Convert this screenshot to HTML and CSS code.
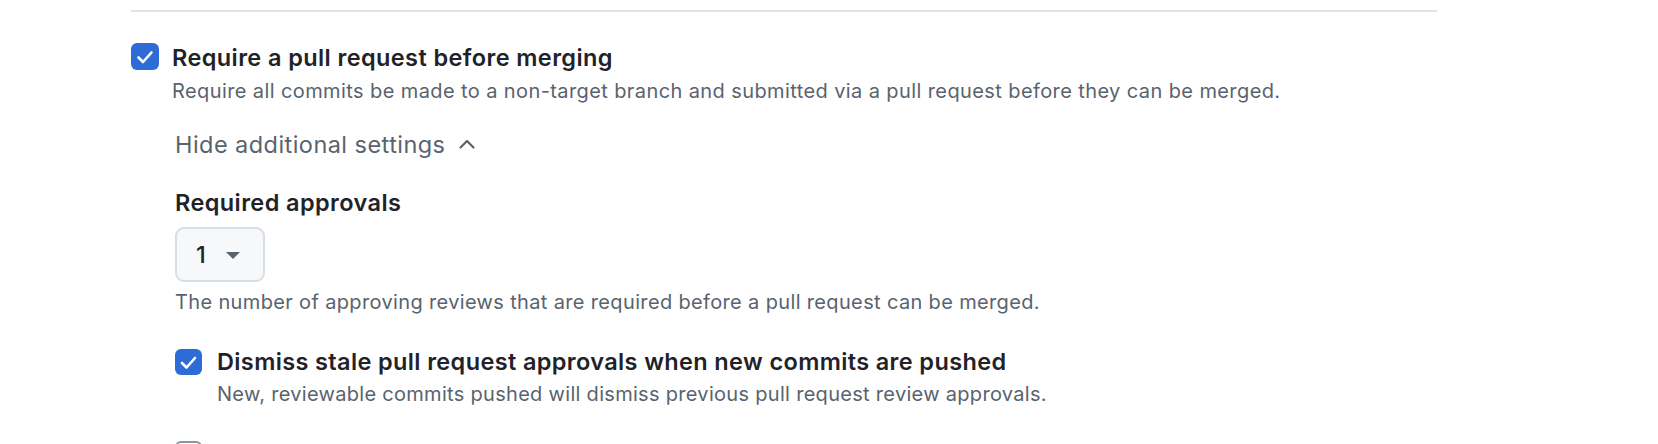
FILE: index.html
```html
<!DOCTYPE html>
<html>
<head>
<meta charset="utf-8">
<link rel="stylesheet" href="styles.css">
</head>
<body>
<div class="page">
  <div class="divider"></div>
  <div class="rule">
    <span class="check checked">
      <svg viewBox="0 0 28 28" width="28" height="28"><polyline points="7.5,14.5 12,19 20.5,9.5" fill="none" stroke="#fff" stroke-width="2.6" stroke-linecap="round" stroke-linejoin="round"/></svg>
    </span>
    <div class="rule-body">
      <div class="title">Require a pull request before merging</div>
      <div class="desc">Require all commits be made to a non-target branch and submitted via a pull request before they can be merged.</div>
    </div>
  </div>
  <div class="nested">
    <div class="toggle">Hide additional settings
      <svg class="chev" viewBox="0 0 18 12" width="18" height="12"><polyline points="2.5,9.5 9,3 15.5,9.5" fill="none" stroke="#59636e" stroke-width="2.2" stroke-linecap="round" stroke-linejoin="round"/></svg>
    </div>
    <div class="label">Required approvals</div>
    <div class="select"><span class="val">1</span><span class="caret"></span></div>
    <div class="desc hint">The number of approving reviews that are required before a pull request can be merged.</div>
    <div class="rule sub">
      <span class="check checked small">
        <svg viewBox="0 0 27 27" width="27" height="27"><polyline points="7,14 11.5,18.5 20,9" fill="none" stroke="#fff" stroke-width="2.6" stroke-linecap="round" stroke-linejoin="round"/></svg>
      </span>
      <div class="rule-body">
        <div class="title">Dismiss stale pull request approvals when new commits are pushed</div>
        <div class="desc">New, reviewable commits pushed will dismiss previous pull request review approvals.</div>
      </div>
    </div>
    <div class="rule sub last">
      <span class="check small"></span>
      <div class="rule-body">
        <div class="title">Require review from Code Owners</div>
      </div>
    </div>
  </div>
</div>
</body>
</html>
```
FILE: styles.css
```css
* { box-sizing: border-box; }
html, body { margin: 0; padding: 0; background: #fff; }
body {
  font-family: Inter, "Liberation Sans", sans-serif;
  color: #1f2328;
  overflow: hidden;
  height: 444px;
}
.page {
  margin-left: 131px;
  width: 1306px;
  padding-top: 10px;
}
.divider {
  height: 2px;
  background: #dfe3e8;
}
.rule {
  display: flex;
  align-items: flex-start;
  gap: 13px;
  margin-top: 31px;
}
.rule-body {
  padding-top: 1px;
}
.check {
  flex: none;
  width: 28px;
  height: 27px;
  margin-top: 0;
  border-radius: 6px;
  border: 2px solid #8c959f;
  background: #fff;
  display: flex;
  align-items: center;
  justify-content: center;
}
.check.checked {
  background: #2d6bd6;
  border: none;
}
.check.small {
  width: 27px;
  height: 26px;
  margin-top: 1px;
}
.title {
  font-size: 23.5px;
  font-weight: 600;
  line-height: 28px;
  letter-spacing: 0.4px;
  color: #1f2328;
}
.desc {
  font-size: 20px;
  line-height: 28px;
  letter-spacing: 0.4px;
  color: #59636e;
  margin-top: 5px;
}
.nested {
  padding-left: 44px;
}
.toggle {
  margin-top: 25px;
  font-size: 23.5px;
  line-height: 30px;
  letter-spacing: 0.45px;
  color: #59636e;
  display: flex;
  align-items: center;
  gap: 13px;
}
.chev { margin-top: -2px; }
.label {
  margin-top: 28px;
  font-size: 23.5px;
  font-weight: 600;
  line-height: 30px;
  letter-spacing: 0.4px;
}
.select {
  margin-top: 9px;
  width: 90px;
  height: 55px;
  border: 2px solid #d8dee4;
  border-radius: 9px;
  background: #f6f8fa;
  display: flex;
  align-items: center;
  padding-left: 19px;
  gap: 20px;
}
.val {
  font-size: 23.5px;
  font-weight: 500;
  color: #1f2328;
}
.caret {
  width: 0;
  height: 0;
  margin-top: 2px;
  border-left: 7px solid transparent;
  border-right: 7px solid transparent;
  border-top: 7px solid #59636e;
}
.hint {
  margin-top: 6px;
  letter-spacing: 0.35px;
}
.rule.sub {
  margin-top: 32px;
  gap: 15px;
}
.rule.sub .rule-body { padding-top: 0; }
.rule.sub .title { letter-spacing: 0.37px; }
.rule.sub .desc { margin-top: 4px; letter-spacing: 0.3px; }
.rule.sub.last { margin-top: 32px; }
```
